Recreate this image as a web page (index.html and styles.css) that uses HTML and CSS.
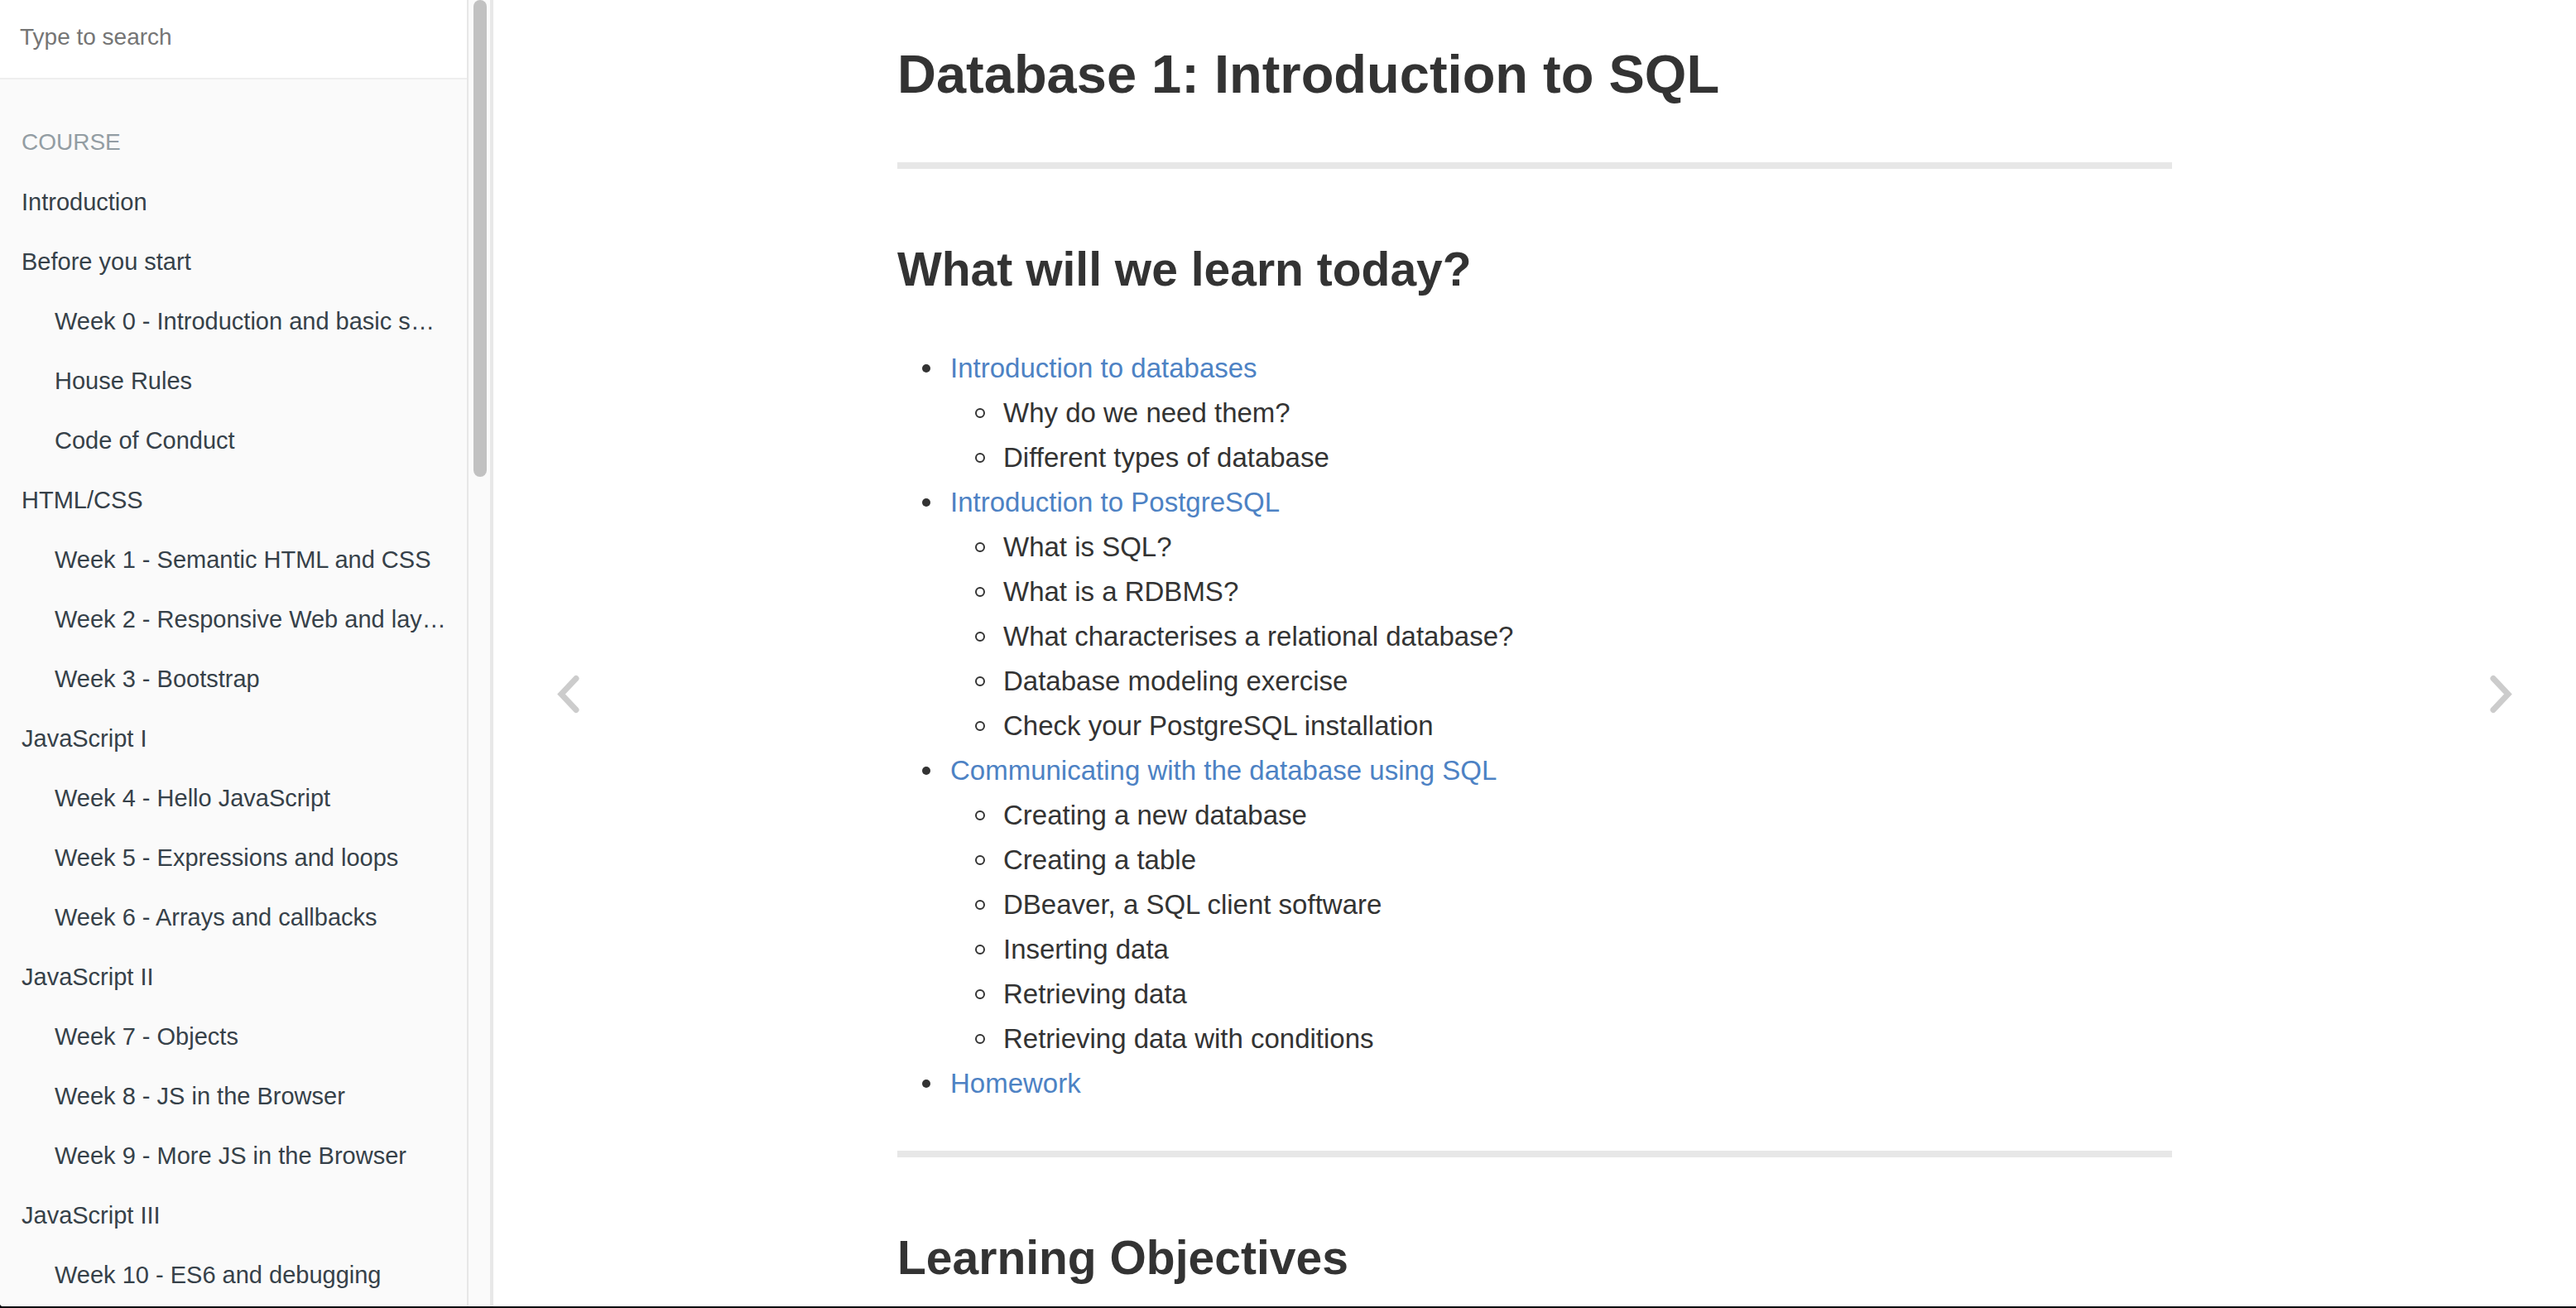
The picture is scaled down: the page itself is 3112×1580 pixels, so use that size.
FILE: index.html
```html
<!DOCTYPE html>
<html lang="en">
<head>
<meta charset="utf-8">
<meta name="viewport" content="width=device-width, initial-scale=1">
<title>Database 1: Introduction to SQL</title>
<link rel="stylesheet" href="styles.css">
</head>
<body>
<div class="book">
  <aside class="sidebar">
    <div class="summary">
      <input class="search" type="search" placeholder="Type to search" aria-label="Type to search">
      <nav class="chapters" aria-label="Chapters">
        <h2 class="part">COURSE</h2>
        <ul class="chapter-list">
          <li><a href="#">Introduction</a></li>
          <li><a href="#">Before you start</a>
            <ul>
              <li><a href="#">Week 0 - Introduction and basic setup</a></li>
              <li><a href="#">House Rules</a></li>
              <li><a href="#">Code of Conduct</a></li>
            </ul>
          </li>
          <li><a href="#">HTML/CSS</a>
            <ul>
              <li><a href="#">Week 1 - Semantic HTML and CSS</a></li>
              <li><a href="#">Week 2 - Responsive Web and layout</a></li>
              <li><a href="#">Week 3 - Bootstrap</a></li>
            </ul>
          </li>
          <li><a href="#">JavaScript I</a>
            <ul>
              <li><a href="#">Week 4 - Hello JavaScript</a></li>
              <li><a href="#">Week 5 - Expressions and loops</a></li>
              <li><a href="#">Week 6 - Arrays and callbacks</a></li>
            </ul>
          </li>
          <li><a href="#">JavaScript II</a>
            <ul>
              <li><a href="#">Week 7 - Objects</a></li>
              <li><a href="#">Week 8 - JS in the Browser</a></li>
              <li><a href="#">Week 9 - More JS in the Browser</a></li>
            </ul>
          </li>
          <li><a href="#">JavaScript III</a>
            <ul>
              <li><a href="#">Week 10 - ES6 and debugging</a></li>
            </ul>
          </li>
        </ul>
      </nav>
    </div>
    <div class="scroll-track"><div class="scroll-thumb"></div></div>
  </aside>
  <main class="page">
    <a class="turn" href="#" aria-label="Previous page">
      <svg viewBox="0 0 28 48" width="28" height="48"><path d="M24 5.500 6 24.500 24 43.500"/></svg>
    </a>
    <article class="content">
      <h1>Database 1: Introduction to SQL</h1>
      <hr>
      <h2>What will we learn today?</h2>
      <ul>
        <li><a href="#">Introduction to databases</a>
          <ul>
            <li>Why do we need them?</li>
            <li>Different types of database</li>
          </ul>
        </li>
        <li><a href="#">Introduction to PostgreSQL</a>
          <ul>
            <li>What is SQL?</li>
            <li>What is a RDBMS?</li>
            <li>What characterises a relational database?</li>
            <li>Database modeling exercise</li>
            <li>Check your PostgreSQL installation</li>
          </ul>
        </li>
        <li><a href="#">Communicating with the database using SQL</a>
          <ul>
            <li>Creating a new database</li>
            <li>Creating a table</li>
            <li>DBeaver, a SQL client software</li>
            <li>Inserting data</li>
            <li>Retrieving data</li>
            <li>Retrieving data with conditions</li>
          </ul>
        </li>
        <li><a href="#">Homework</a></li>
      </ul>
      <hr>
      <h2>Learning Objectives</h2>
    </article>
    <a class="turn" href="#" aria-label="Next page">
      <svg viewBox="0 0 28 48" width="28" height="48"><path d="M4 5.500 22 24.500 4 43.500"/></svg>
    </a>
  </main>
</div>
</body>
</html>
```
FILE: styles.css
```css
*,
*::before {
  box-sizing: border-box;
}

body {
  margin: 0;
  background: #05060c;
  color: #333;
  font-family: "Liberation Sans", Arial, sans-serif;
  font-size: 33px;
  line-height: 54px;
}

ul {
  margin: 0;
  padding: 0;
  list-style: none;
}

a {
  color: #4d82c4;
  text-decoration: none;
}

.book {
  display: flex;
  height: calc(100vh - 2px);
  overflow: hidden;
  background: #fff;
  border-bottom-left-radius: 4px;
}

/* Sidebar */
.sidebar {
  display: flex;
  flex: none;
  width: 596px;
  background: #fafafa;
  border-right: 4px solid #e8e8e8;
  font-size: 29px;
}

.summary {
  flex: 1;
  min-width: 0;
  border-right: 2px solid #e7e7e7;
}

.search {
  display: block;
  width: 100%;
  height: 96px;
  padding: 0 24px 4px;
  border: 0;
  border-bottom: 2px solid #eee;
  border-radius: 0;
  background: #fff;
  font: inherit;
  font-size: 28px;
  appearance: none;
  outline: 0;
}

.search::placeholder {
  color: #757575;
}

.chapters {
  padding-top: 40px;
}

.part {
  margin: 0;
  padding-left: 26px;
  color: #939da3;
  font-size: 28px;
  font-weight: 400;
  line-height: 72px;
}

.chapter-list ul {
  padding-left: 40px;
}

.chapter-list a {
  display: block;
  padding: 0 24px 0 26px;
  overflow: hidden;
  color: #364149;
  line-height: 72px;
  text-overflow: ellipsis;
  white-space: nowrap;
}

.scroll-track {
  width: 26px;
  padding: 0 4px 0 6px;
}

.scroll-thumb {
  height: 576px;
  border-radius: 8px;
  background: #c1c1c1;
}

/* Page */
.page {
  display: flex;
  flex: 1;
  justify-content: space-between;
  min-width: 0;
}

.turn {
  display: flex;
  flex: none;
  align-items: center;
  justify-content: center;
  width: 180px;
  padding-top: 98px;
}

.turn svg {
  fill: none;
  stroke: #ccc;
  stroke-width: 7;
  stroke-linecap: round;
}

.content {
  flex: 0 1 1540px;
  padding-top: 36px;
}

.content h1 {
  margin: 0 0 52px;
  font-size: 65px;
  line-height: 108px;
}

.content h2 {
  margin: 73px 0 45px;
  font-size: 57px;
  line-height: 96px;
}

.content hr {
  height: 8px;
  margin: 0;
  border: 0;
  background: #e7e7e7;
}

.content ul {
  padding-left: 64px;
}

.content ul + hr {
  margin-top: 54px;
}

/* List bullets hang in the indent, centred on the first line */
.content li {
  position: relative;
}

.content li::before {
  content: "";
  position: absolute;
  top: 22px;
  left: -34px;
  width: 10px;
  height: 10px;
  border-radius: 50%;
  background: #333;
}

.content li li::before {
  top: 21px;
  width: 12px;
  height: 12px;
  border: 2px solid #333;
  background: none;
}
```
